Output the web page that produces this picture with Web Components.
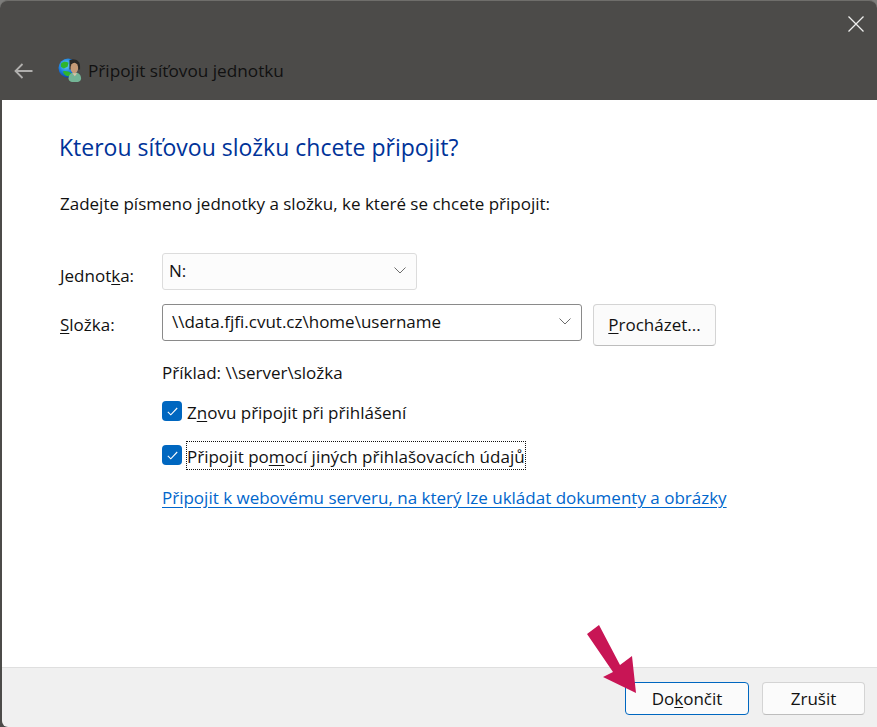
<!doctype html>
<html lang="cs">
<head>
<meta charset="utf-8">
<title>Připojit síťovou jednotku</title>
<style>
  html, body { margin: 0; height: 100%; background: #7d7d7b; }
  body { font: 17px "Open Sans", "Noto Sans", sans-serif; color: #111; }
  u { text-underline-offset: 2px; text-decoration-thickness: 1px; }
</style>
</head>
<body>

<wiz-window>
  <wiz-titlebar slot="top">Připojit síťovou jednotku</wiz-titlebar>

  <wiz-heading>Kterou síťovou složku chcete připojit?</wiz-heading>
  <wiz-text class="intro">Zadejte písmeno jednotky a složku, ke které se chcete připojit:</wiz-text>

  <wiz-form>
    <span slot="label1">Jednot<u>k</u>a:</span>
    <wiz-combo slot="field1" style="width:255px">N:</wiz-combo>
    <span slot="label2"><u>S</u>ložka:</span>
    <wiz-combo slot="field2" focused style="width:420px">\\data.fjfi.cvut.cz\home\username</wiz-combo>
    <wiz-button slot="extra" style="--w:123px;--h:42px;margin-left:11px"><u>P</u>rocházet...</wiz-button>

    <span slot="example">Příklad: \\server\složka</span>
    <wiz-check slot="opt1">Z<u>n</u>ovu připojit při přihlášení</wiz-check>
    <wiz-check slot="opt2" focused>Připojit po<u>m</u>ocí jiných přihlašovacích údajů</wiz-check>
    <wiz-link slot="link">Připojit k webovému serveru, na který lze ukládat dokumenty a obrázky</wiz-link>
  </wiz-form>

  <wiz-footer slot="bottom">
    <wiz-button primary style="--w:124px;--h:33px">Do<u>k</u>ončit</wiz-button>
    <wiz-button style="--w:103px;--h:33px">Zrušit</wiz-button>
  </wiz-footer>
</wiz-window>

<arrow-mark></arrow-mark>

<script>
const FONT = '"Open Sans", "Noto Sans", sans-serif'

function shadow (el, html) {
  el.attachShadow({ mode: 'open' })
  el.shadowRoot.innerHTML = html
}

customElements.define('wiz-window', class extends HTMLElement {
  constructor () {
    super()
    shadow(this, `
<style>
  :host{
    display: flex;
    flex-direction: column;
    height: 727px;
    box-sizing: border-box;
    background: #4c4b49;
    border-top: 1px solid #6f6e6b;
    border-radius: 8px 8px 0 0;
    overflow: hidden;
  }
  main{
    flex: 1;
    display: flex;
    flex-direction: column;
    background: #fff;
    margin-left: 2px;
    padding-left: 58px;
  }
</style>
<slot name="top"></slot>
<main><slot></slot></main>
<slot name="bottom"></slot>
`)
  }
})

customElements.define('wiz-titlebar', class extends HTMLElement {
  constructor () {
    super()
    shadow(this, `
<style>
  :host{
    display: flex;
    align-items: center;
    height: 99px;
    box-sizing: border-box;
    padding: 40px 0 0 14px;
    position: relative;
    font: 17.2px ${FONT};
    color: #111;
  }
  .back{ margin-right: 25px; }
  .icon{ margin: -2px 6px 0 0; }
  .close{ position: absolute; top: 15px; right: 13px; }
</style>
<svg class="back" width="19" height="16" viewBox="0 0 19 16" fill="none" stroke="#b0afad" stroke-width="1.8"><path d="M18.500 8H1.500M8.500 1 1.500 8l7 7"/></svg>
<svg class="icon" width="24" height="24" viewBox="0 0 25 25">
  <defs>
    <radialGradient id="g" cx=".4" cy=".35" r=".7"><stop offset="0" stop-color="#6fd6f5"/><stop offset=".55" stop-color="#1a7fe0"/><stop offset="1" stop-color="#0b3a9c"/></radialGradient>
  </defs>
  <circle cx="10.500" cy="10.500" r="10" fill="url(#g)"/>
  <path d="M3 6c3-3 6-2 8-1l-1 4-4 2-3-2zM5 14c3-1 6 0 9 2l-3 3c-3 0-5-2-6-5z" fill="#2fb52e"/>
  <path d="M12 2c6-2 11 1 11 7v3H12z" fill="#2b2826"/>
  <path d="M11 21c0-4 3-6 6.500-6s6.500 2 6.500 6c0 3-2 4-6.500 4s-6.500-1-6.500-4z" fill="#74b596"/>
  <ellipse cx="17" cy="10.500" rx="4" ry="5.500" fill="#c69a76"/>
  <path d="M15 16h5l-2.500 3z" fill="#d9c2a8"/>
</svg>
<span><slot></slot></span>
<svg class="close" width="16" height="16" viewBox="0 0 16 16" stroke="#efefee" stroke-width="1.300"><path d="M.5.500l15 15M15.500.500l-15 15"/></svg>
`)
  }
})

customElements.define('wiz-heading', class extends HTMLElement {
  constructor () {
    super()
    shadow(this, `
<style>
  :host{
    display: block;
    margin-top: 30px;
    margin-left: -1px;
    font: 23px/34px ${FONT};
    color: #003399;
  }
</style>
<slot></slot>
`)
  }
})

customElements.define('wiz-text', class extends HTMLElement {
  constructor () {
    super()
    shadow(this, `
<style>
  :host{
    display: block;
    margin-top: 28px;
    font: 17px/24px ${FONT};
    color: #111;
  }
</style>
<slot></slot>
`)
  }
})

// the labelled fields: label column is 102px wide, everything lines up on it
customElements.define('wiz-form', class extends HTMLElement {
  constructor () {
    super()
    shadow(this, `
<style>
  :host{
    display: grid;
    grid-template-columns: 102px 1fr;
    margin-top: 37px;
    font: 17px/24px ${FONT};
    color: #111;
  }
  .row{ display: flex; align-items: flex-start; }
  .l1{ padding-top: 11px; }
  .l2{ padding-top: 9px; }
  .r1{ height: 51px; }
  .r2{ height: 45px; }
  .ex{ grid-column: 2; margin-top: 12px; height: 40px; }
  .c1{ grid-column: 2; height: 44px; }
  .c2{ grid-column: 2; height: 41px; }
  .lnk{ grid-column: 2; }
</style>
<div class="l1"><slot name="label1"></slot></div>
<div class="row r1"><slot name="field1"></slot></div>
<div class="l2"><slot name="label2"></slot></div>
<div class="row r2"><slot name="field2"></slot><slot name="extra"></slot></div>
<div class="ex"><slot name="example"></slot></div>
<div class="c1"><slot name="opt1"></slot></div>
<div class="c2"><slot name="opt2"></slot></div>
<div class="lnk"><slot name="link"></slot></div>
`)
  }
})

customElements.define('wiz-combo', class extends HTMLElement {
  constructor () {
    super()
    shadow(this, `
<style>
  :host{
    display: flex;
    align-items: center;
    justify-content: space-between;
    box-sizing: border-box;
    height: 37px;
    padding: 0 10px 0 6px;
    border: 1px solid #dcdcdc;
    border-radius: 3px;
    background: #fcfcfc;
    color: #111;
  }
  :host([focused]){
    padding-left: 9px;
    border-color: #8a8a8a;
    background: #fff;
  }
  span{ margin-top: -2px; }
  svg{ flex: none; margin-top: -2px; }
</style>
<span><slot></slot></span>
<svg width="12" height="7" viewBox="0 0 12 7" fill="none" stroke="#6d6d6d"><path d="M.5.500 6 6l5.500-5.500"/></svg>
`)
  }
})

customElements.define('wiz-button', class extends HTMLElement {
  constructor () {
    super()
    shadow(this, `
<style>
  :host{
    display: flex;
    align-items: center;
    justify-content: center;
    box-sizing: border-box;
    width: var(--w);
    height: var(--h);
    border: 1px solid #d4d4d4;
    border-bottom-color: #bdbdbd;
    border-radius: 4px;
    background: #fbfbfb;
    color: #111;
  }
  :host([primary]){ border-color: #0067c0; }
</style>
<slot></slot>
`)
  }
})

customElements.define('wiz-check', class extends HTMLElement {
  constructor () {
    super()
    shadow(this, `
<style>
  :host{
    display: flex;
    align-items: center;
    height: 20px;
  }
  .box{
    flex: none;
    display: flex;
    align-items: center;
    justify-content: center;
    width: 20px;
    height: 20px;
    margin-right: 5px;
    border-radius: 4px;
    background: #0067c0;
  }
  .txt{
    padding-top: 3px;
    line-height: 24px;
    outline: 1px dotted transparent;
    white-space: nowrap;
  }
  :host([focused]) .txt{ outline-color: #111; }
</style>
<span class="box"><svg width="11" height="9" viewBox="0 0 11 9" fill="none" stroke="#fff" stroke-width="1.100"><path d="M.8 4.800 3.800 7.800 10.200 1"/></svg></span>
<span class="txt"><slot></slot></span>
`)
  }
})

customElements.define('wiz-link', class extends HTMLElement {
  constructor () {
    super()
    shadow(this, `
<style>
  :host{
    display: inline-block;
    color: #0066cc;
    text-decoration: underline;
    text-underline-offset: 3px;
    white-space: nowrap;
  }
</style>
<slot></slot>
`)
  }
})

customElements.define('wiz-footer', class extends HTMLElement {
  constructor () {
    super()
    shadow(this, `
<style>
  :host{
    display: flex;
    justify-content: flex-end;
    align-items: flex-start;
    gap: 13px;
    box-sizing: border-box;
    height: 60px;
    padding: 14px 12px 0 0;
    margin-left: 2px;
    background: #f0f0f0;
    border-top: 1px solid #dfdfdf;
    border-bottom-left-radius: 6px;
    font: 17px ${FONT};
  }
</style>
<slot></slot>
`)
  }
})

// red arrow annotation, lies over the footer
customElements.define('arrow-mark', class extends HTMLElement {
  constructor () {
    super()
    shadow(this, `
<style>
  :host{
    position: absolute;
    left: 587px;
    top: 625px;
    width: 50px;
    height: 68px;
  }
  svg{ display: block; }
</style>
<svg width="50" height="68" viewBox="0 0 50 68"><path d="M0 9 12 0 33 40 45 31 49 68 16 52 26 47z" fill="#c81555"/></svg>
`)
  }
})
</script>
</body>
</html>
